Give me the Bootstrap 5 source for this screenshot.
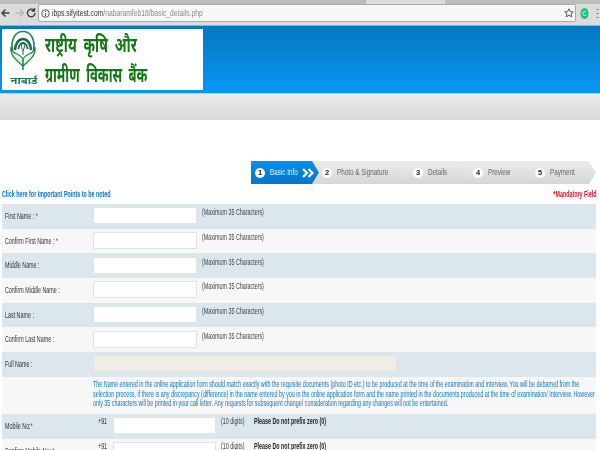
<!DOCTYPE html>
<html lang="hi">
<head>
<meta charset="utf-8">
<title>Basic Details</title>
<link href="https://cdn.jsdelivr.net/npm/bootstrap@5.3.0/dist/css/bootstrap.min.css" rel="stylesheet">
<style>
html,body{height:450px;overflow:hidden;background:#fff}
body{font-family:"Liberation Sans",Arial,sans-serif;font-size:9px;color:#444;line-height:1.2;filter:blur(.3px)}
.sq{display:inline-block;white-space:nowrap;transform:scaleX(.595);transform-origin:0 50%;flex:none}
.tabstrip{height:4px;background:#bdbdbd}
.tabstrip span{display:block;margin-left:366px;width:79px;height:4px;background:#dcdcdc}
.chrome-bar{height:22px;background:#dcdcdc;padding:0 1px 3px 0;border-bottom:1px solid #ababab}
.nav-glyph{width:12.500px;height:16px;flex:none}
.addr{height:18px;background:#f8f8f8;border:1px solid #a8a8a8;border-radius:2px;font-size:9.5px;color:#8a8a8a;padding:0 1px 0 2px;gap:2px}
.addr .sq{transform:scaleX(.71)}
.addr b{font-weight:400;color:#333}
.head-blue{height:68px;background:linear-gradient(#0377bf,#0a96f5);padding:3px 0 4px 2px;border-bottom:1px solid #a9d5f0}
.logo-box{width:201px;height:61px;background:#fff;padding:0 0 0 6px;gap:7px}
.hin{font-family:"Noto Sans Devanagari","Lohit Devanagari","FreeSans","DejaVu Sans","Noto Sans",sans-serif;font-weight:700;color:#147514;font-size:21px;line-height:30px;word-spacing:5px;white-space:nowrap;margin-top:3px}
.hin div{transform-origin:0 50%}
.hl1{transform:scaleX(.66)}
.hl2{transform:scaleX(.62)}
.band-gray{height:26px;background:linear-gradient(#ebebeb,#d9d9d9)}
.gap-white{height:41px}
.steps{height:23px;padding-left:251px}
.stepitem{height:23px;color:#666;background:linear-gradient(#ececec,#d6d6d6);clip-path:polygon(0 0,calc(100% - 7px) 0,100% 50%,calc(100% - 7px) 100%,0 100%,7px 50%);margin-right:-7px;gap:5px;flex:none}
.stepitem .sq{width:10px;transform:scaleX(.7)}
.stepitem.now{background:linear-gradient(#0a8ee6,#0377cc);color:#eef5fc;clip-path:polygon(0 0,calc(100% - 7px) 0,100% 50%,calc(100% - 7px) 100%,0 100%);padding-left:4px;position:relative;z-index:2}
.s1{width:68px}.s2{width:95px;padding-left:10px}.s3{width:70px;padding-left:13px}.s4{width:69px;padding-left:10px}.s5{width:71px;padding-left:10px;margin-right:0}
.dot{width:10px;height:10px;border-radius:50%;background:#fff;color:#222;font-weight:700;font-size:7.5px;flex:none}
.arrowsvg{margin-left:auto;margin-right:5px;flex:none}
.linkrow{height:20px;padding:5px 3px 0 2px}
.imp{color:#0a6fc2;font-weight:700}
.mand{color:#e0101c;font-weight:700;transform-origin:100% 50%}
.formbox{margin:0 4px 0 2px}
.frow{height:24.700px;background:#f7f7f7}
.frow.alt{background:#dce6ed}
.lab{width:91px;padding-left:3px;padding-top:7px;color:#333;flex:none}
.lab i{color:#d9202a;font-style:normal}
.val{padding-top:3.200px}
.boxin{width:104px;height:17px;background:#fff;border:1px solid #e2e2e2;border-radius:1px;flex:none}
.hint{width:50px;margin-left:4.500px;color:#444;flex:none}
.hint .sq{display:block}
.fullbox{width:304px;height:17px;background:#efede6;border:1px solid #e4e2da;border-radius:1px}
.note{height:37px;padding:3.500px 0 0 91px;color:#1276bd;line-height:9.500px;overflow:hidden}
.note .sq{transform:scaleX(.597)}
.plus{width:20px;padding-left:5px;color:#333;margin-top:-1px;flex:none}
.digits{width:33px;margin-left:5px;margin-top:-1px;flex:none;color:#444}
.warn{font-weight:700;color:#222;margin-top:-1px;flex:none}
.mobbox{width:103px;height:17px;background:#fff;border:1px solid #e2e2e2;flex:none}
.tail{height:12px;overflow:hidden}
</style>
</head>
<body>
<div class="tabstrip"><span></span></div>
<div class="chrome-bar d-flex align-items-center">
  <svg class="nav-glyph" viewBox="0 0 12.500 16"><path d="M9.500 8H2.500M5.500 4.500 2 8l3.500 3.500" fill="none" stroke="#444" stroke-width="1.500"/></svg>
  <svg class="nav-glyph" viewBox="0 0 12.500 16"><path d="M2.500 8h7M7 4.500 10.500 8 7 11.500" fill="none" stroke="#b5b5b5" stroke-width="1.500"/></svg>
  <svg class="nav-glyph" viewBox="0 0 12.500 16"><path d="M10 8a3.800 3.800 0 1 1-1.200-2.800M9.500 3v3h-3" fill="none" stroke="#444" stroke-width="1.400"/></svg>
  <div class="addr flex-grow-1 d-flex align-items-center">
    <svg width="9" height="9" viewBox="0 0 9 9" class="flex-shrink-0"><circle cx="4.500" cy="4.500" r="3.800" fill="none" stroke="#555"/><path d="M4.500 4v3M4.500 2v1" stroke="#555"/></svg>
    <span class="sq"><b>ibps.sifyitest.com</b>/nabaramfeb18/basic_details.php</span>
    <svg class="ms-auto flex-shrink-0" width="10" height="10" viewBox="0 0 10 10"><path d="M5 .8l1.300 2.800 3 .3-2.300 2 .7 3L5 7.300 2.300 8.900l.7-3-2.300-2 3-.3z" fill="none" stroke="#555"/></svg>
  </div>
  <svg class="flex-shrink-0" style="margin-left:4px" width="9" height="13" viewBox="0 0 9 13"><ellipse cx="4.500" cy="6.500" rx="4" ry="5.500" fill="#1fc27c"/><path d="M6 5a2 2 0 1 0 0 3" fill="none" stroke="#dff"/></svg>
  <svg class="flex-shrink-0" style="margin-left:7px" width="3" height="11" viewBox="0 0 3 11"><path d="M1.500 1v1M1.500 5v1M1.500 9v1" stroke="#777" stroke-width="2"/></svg>
</div>

<div class="head-blue">
  <div class="logo-box d-flex">
    <svg width="30" height="61" viewBox="0 0 30 61" class="flex-shrink-0">
      <g fill="none">
        <path d="M4.500 21C2.500 11 7 2.500 15 2.500S27.500 11 25.500 21" stroke="#2e7d62" stroke-width="1.600"/>
        <path d="M7 21a8 11 0 1 1 16 0" stroke="#156b4c" stroke-width="2.600"/>
        <path d="M10.500 20a4.500 6 0 1 1 9 0" stroke="#156b4c" stroke-width="1.900"/>
        <path d="M15 13.500c-2 2-2 5 0 8 2-3 2-6 0-8zM15 21v5" stroke="#156b4c" stroke-width="1"/>
        <path d="M3 18c-1 8 4 12 12 19 8-7 13-11 12-19-1 4-3 6-5 6.500-2.500 1-5 2.500-7 5-2-2.500-4.500-4-7-5-2-.5-4-2.500-5-6.500z" stroke="#1f7f3c" stroke-width="1.200" fill="#e4f1e6"/>
        <path d="M15 30v11" stroke="#1f7f3c" stroke-width="1.500"/>
      </g>
      <text x="16" y="55" text-anchor="middle" font-size="9.500" font-weight="700" fill="#1d7a55" style="font-family:'Noto Sans Devanagari','FreeSans',sans-serif" textLength="27" lengthAdjust="spacingAndGlyphs">नाबार्ड</text>
    </svg>
    <div class="hin"><div class="hl1">राष्ट्रीय कृषि और</div><div class="hl2">ग्रामीण विकास बैंक</div></div>
  </div>
</div>
<div class="band-gray"></div>
<div class="gap-white"></div>

<div class="steps d-flex">
  <div class="stepitem now s1 d-flex align-items-center"><span class="dot d-flex align-items-center justify-content-center">1</span><span class="sq">Basic Info</span><svg class="arrowsvg" width="12" height="10" viewBox="0 0 12 10"><path d="M1 1l4 4-4 4M6.500 1l4 4-4 4" fill="none" stroke="#fff" stroke-width="2.200"/></svg></div>
  <div class="stepitem s2 d-flex align-items-center"><span class="dot d-flex align-items-center justify-content-center">2</span><span class="sq">Photo &amp; Signature</span></div>
  <div class="stepitem s3 d-flex align-items-center"><span class="dot d-flex align-items-center justify-content-center">3</span><span class="sq">Details</span></div>
  <div class="stepitem s4 d-flex align-items-center"><span class="dot d-flex align-items-center justify-content-center">4</span><span class="sq">Preview</span></div>
  <div class="stepitem s5 d-flex align-items-center"><span class="dot d-flex align-items-center justify-content-center">5</span><span class="sq">Payment</span></div>
</div>

<div class="linkrow d-flex justify-content-between">
  <span class="imp sq">Click here for Important Points to be noted</span>
  <span class="mand sq">*Mandatory Field</span>
</div>

<div class="formbox">
  <div class="frow alt d-flex"><div class="lab"><span class="sq">First Name : <i>*</i></span></div><div class="val d-flex"><div class="boxin"></div><div class="hint"><span class="sq">(Maximum 35 Characters)</span></div></div></div>
  <div class="frow d-flex"><div class="lab"><span class="sq">Confirm First Name : <i>*</i></span></div><div class="val d-flex"><div class="boxin"></div><div class="hint"><span class="sq">(Maximum 35 Characters)</span></div></div></div>
  <div class="frow alt d-flex"><div class="lab"><span class="sq">Middle Name :</span></div><div class="val d-flex"><div class="boxin"></div><div class="hint"><span class="sq">(Maximum 35 Characters)</span></div></div></div>
  <div class="frow d-flex"><div class="lab"><span class="sq">Confirm Middle Name :</span></div><div class="val d-flex"><div class="boxin"></div><div class="hint"><span class="sq">(Maximum 35 Characters)</span></div></div></div>
  <div class="frow alt d-flex"><div class="lab"><span class="sq">Last Name :</span></div><div class="val d-flex"><div class="boxin"></div><div class="hint"><span class="sq">(Maximum 35 Characters)</span></div></div></div>
  <div class="frow d-flex"><div class="lab"><span class="sq">Confirm Last Name :</span></div><div class="val d-flex"><div class="boxin"></div><div class="hint"><span class="sq">(Maximum 35 Characters)</span></div></div></div>
  <div class="frow alt d-flex"><div class="lab"><span class="sq">Full Name :</span></div><div class="val"><div class="fullbox"></div></div></div>
  <div class="frow note"><span class="sq">The Name entered in the online application form should match exactly with the requisite documents (photo ID etc.) to be produced at the time of the examination and interview. You will be debarred from the<br>selection process, if there is any discrepancy (difference) in the name entered by you in the online application form and the name printed in the documents produced at the time of examination/ Interview. However<br>only 35 characters will be printed in your call letter. Any requests for subsequent change/ consideration regarding any changes will not be entertained.</span></div>
  <div class="frow alt d-flex"><div class="lab"><span class="sq">Mobile No:<i>*</i></span></div><div class="val d-flex"><div class="plus"><span class="sq">+91</span></div><div class="mobbox"></div><div class="digits"><span class="sq">(10 digits)</span></div><div class="warn"><span class="sq">Please Do not prefix zero (0)</span></div></div></div>
  <div class="frow tail d-flex"><div class="lab"><span class="sq">Confirm Mobile No: <i>*</i></span></div><div class="val d-flex"><div class="plus"><span class="sq">+91</span></div><div class="mobbox"></div><div class="digits"><span class="sq">(10 digits)</span></div><div class="warn"><span class="sq">Please Do not prefix zero (0)</span></div></div></div>
</div>
<script src="https://cdn.jsdelivr.net/npm/bootstrap@5.3.0/dist/js/bootstrap.bundle.min.js"></script>
</body>
</html>
